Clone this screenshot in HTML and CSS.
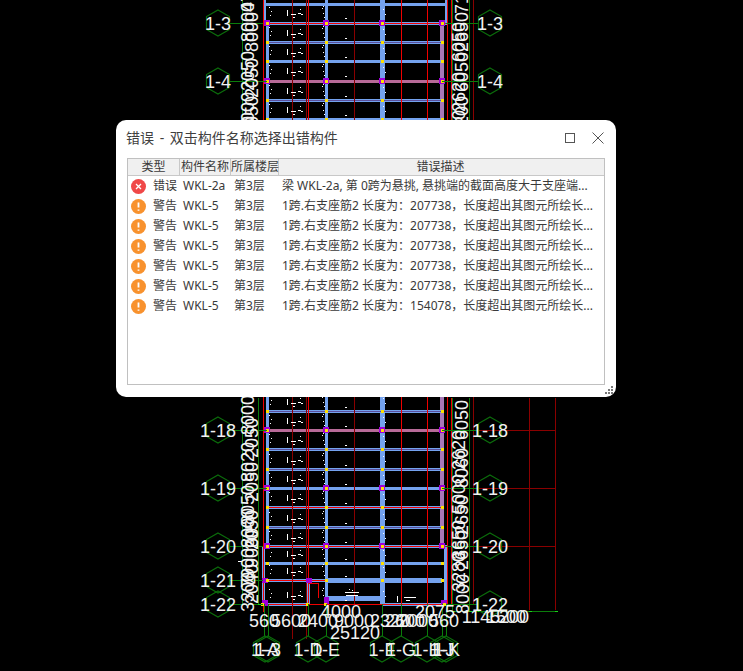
FILE: index.html
```html
<!DOCTYPE html>
<html lang="zh-CN">
<head>
<meta charset="utf-8">
<title>错误</title>
<link rel="stylesheet" href="styles.css">
</head>
<body>
<main class="stage">
<svg class="cad" width="743" height="671" viewBox="0 0 743 671" xmlns="http://www.w3.org/2000/svg">
  <defs>
    <polygon id="hex" class="hex" points="0,-13 11.5,-6.5 11.5,6.5 0,13 -11.5,6.5 -11.5,-6.5"/>
    <g id="noise">
      <path class="noise" d="M287 -12v6M291 -8h5M298 -9h3M301 -8h2M269 -15h1M271 -11h1M270 -7h1M322 -14h1M323 -9h1M324 -5h1M323 -16h1M293 -5h2M345 -4h2M383 -13h1M385 -8h1M300 -13h1"/>
    </g>
    <g id="nodes">
      <rect class="node" x="266" y="-1" width="3" height="3"/>
      <rect class="node" x="325" y="-1" width="3" height="3"/>
      <rect class="node" x="381" y="-1" width="3" height="3"/>
      <rect class="node" x="441" y="-1" width="3" height="3"/>
    </g>
    <g id="bignodes">
      <rect class="purple" x="264" y="-3" width="6" height="6"/>
      <rect class="purple" x="323" y="-3" width="6" height="6"/>
      <rect class="purple" x="379" y="-3" width="6" height="6"/>
      <rect class="purple" x="439" y="-3" width="6" height="6"/>
    </g>
  </defs>

  <!-- beams -->
  <path class="beam" d="M264 0V22M446 0V22M267 22V546M326 0V604M263 546V604M308 580V604M445 546V604"/>
  <path class="beam-thick" d="M382 0V604M326 580H442M326 598H382"/>
  <path class="beam-mauve" d="M442 22V546"/>
  <path class="beam" d="M264 4H446M263 23H447M267 42H442M267 61H442M267 100H442M267 119H442M267 411H442M267 449H442M267 469H442M267 488H442M267 507H442M267 527H442M263 546H447M263 563H445M263 580H326M382 604H446M263 604H308"/>
  <path class="beam-core" d="M267 42H442M267 100H442M267 449H442M267 469H442M267 411H442M267 527H442"/>
  <path class="beam-hot" d="M267 81H442M267 430H442"/>

  <!-- grid lines run over the beams -->
  <path class="dim-red" d="M473 0V604M529 398V610M555 398V610M292 0V639M306 0V639M354 0V604M473 430H555M473 488H555M473 546H555"/>
  <path class="red" d="M263 0V612M308 0V610M401 0V606M427 0V606M447 0V612M451 0V120M451 398V604"/>
  <path class="red" d="M263 23H447M263 546H447M263 580H326M263 604H447M267 507H442M308 583H318M318 583V598"/>

  <!-- noise marks -->
  <use href="#noise" y="22"/><use href="#noise" y="42"/><use href="#noise" y="61"/><use href="#noise" y="80"/><use href="#noise" y="100"/><use href="#noise" y="119"/>
  <use href="#noise" y="411"/><use href="#noise" y="430"/><use href="#noise" y="449"/><use href="#noise" y="469"/><use href="#noise" y="488"/><use href="#noise" y="507"/><use href="#noise" y="527"/><use href="#noise" y="546"/><use href="#noise" y="563"/><use href="#noise" y="580"/><use href="#noise" y="604"/>
  <path class="noise" d="M345 592h14M349 589h1M352 590h1M346 595h12M397 596v6M404 597h12M406 600h4M238 561h4"/>

  <!-- nodes -->
  <use href="#bignodes" y="23"/><use href="#bignodes" y="81"/><use href="#bignodes" y="430"/><use href="#bignodes" y="488"/><use href="#bignodes" y="546"/>
  <rect class="purple" x="262" y="578" width="6" height="5"/><rect class="purple" x="306" y="578" width="6" height="5"/><rect class="purple" x="262" y="600" width="6" height="6"/><rect class="purple" x="324" y="597" width="5" height="7"/><rect class="purple" x="441" y="600" width="6" height="6"/>
  <use href="#nodes" y="23"/><use href="#nodes" y="42"/><use href="#nodes" y="61"/><use href="#nodes" y="81"/><use href="#nodes" y="100"/><use href="#nodes" y="119"/><use href="#nodes" y="411"/><use href="#nodes" y="430"/><use href="#nodes" y="449"/><use href="#nodes" y="469"/><use href="#nodes" y="488"/><use href="#nodes" y="507"/><use href="#nodes" y="527"/><use href="#nodes" y="546"/><use href="#nodes" y="563"/><use href="#nodes" y="580"/>
  <rect class="node" x="261" y="603" width="3" height="3"/><rect class="node" x="306" y="603" width="3" height="3"/><rect class="node" x="324" y="603" width="3" height="3"/><rect class="node" x="443" y="603" width="3" height="3"/>

  <!-- axis stems -->
  <path class="green" d="M230 23H263M230 81H267M230 430H267M230 488H267M230 546H263M230 580H263M230 604H263M446 23H478M442 81H478M442 430H478M442 488H478M446 546H478M447 604H478M242 0V120M242 398V604M258 398V604M452 0V120M452 398V612M469 0V120M469 398V612M447 611H555M264 604V636M268 604V636M308 604V636M326 604V636M382 604V636M401 604V636M427 604V636M442 604V636M446 604V636"/>
  <path class="green-dot" d="M242 604h3M258 604h3M452 611h3M469 611h3M529 611h3M555 611h3M478 611h3"/>

  <!-- axis bubbles -->
  <use href="#hex" x="218" y="23"/><use href="#hex" x="218" y="81"/><use href="#hex" x="218" y="430"/><use href="#hex" x="218" y="488"/><use href="#hex" x="218" y="546"/><use href="#hex" x="218" y="580"/><use href="#hex" x="218" y="604"/>
  <use href="#hex" x="490" y="23"/><use href="#hex" x="490" y="81"/><use href="#hex" x="490" y="430"/><use href="#hex" x="490" y="488"/><use href="#hex" x="490" y="546"/><use href="#hex" x="490" y="604"/>
  <use href="#hex" x="265" y="649"/><use href="#hex" x="268" y="649"/><use href="#hex" x="308" y="649"/><use href="#hex" x="326" y="649"/><use href="#hex" x="382" y="649"/><use href="#hex" x="401" y="649"/><use href="#hex" x="427" y="649"/><use href="#hex" x="442" y="649"/><use href="#hex" x="446" y="649"/>

  <!-- axis labels -->
  <g class="label">
    <text x="218" y="30">1-3</text><text x="218" y="88">1-4</text><text x="218" y="437">1-18</text><text x="218" y="495">1-19</text><text x="218" y="553">1-20</text><text x="218" y="587">1-21</text><text x="218" y="611">1-22</text>
    <text x="490" y="30">1-3</text><text x="490" y="88">1-4</text><text x="490" y="437">1-18</text><text x="490" y="495">1-19</text><text x="490" y="553">1-20</text><text x="490" y="611">1-22</text>
    <text x="265" y="656">1-A</text><text x="268" y="656">1-3</text><text x="308" y="656">1-D</text><text x="326" y="656">1-E</text><text x="382" y="656">1-F</text><text x="401" y="656">1-G</text><text x="427" y="656">1-H</text><text x="442" y="656">1-J</text><text x="446" y="656">1-K</text>
  </g>

  <!-- horizontal dimensions -->
  <g class="label">
    <text x="264" y="627">560</text><text x="291" y="627">5600</text><text x="318" y="627">2400</text><text x="341" y="618">4000</text><text x="354" y="627">9000</text><text x="355" y="639">25120</text>
    <text x="390" y="627">2320</text><text x="405" y="627">2600</text><text x="418" y="627">2000</text><text x="435" y="618">2075</text><text x="444" y="627">560</text><text x="481" y="623">1145</text><text x="506" y="623">1500</text><text x="514" y="623">200</text>
  </g>

  <!-- vertical dimensions -->
  <g class="label">
    <text transform="translate(254 22) rotate(-90)">8000</text><text transform="translate(254 -8) rotate(-90)">4790</text>
    <text transform="translate(258 32) rotate(-90)">8000</text><text transform="translate(254 71) rotate(-90)">2050</text><text transform="translate(258 78) rotate(-90)">2050</text><text transform="translate(254 112) rotate(-90)">8000</text><text transform="translate(258 116) rotate(-90)">2050</text><text transform="translate(254 136) rotate(-90)">9020</text>
    <text transform="translate(254 415) rotate(-90)">8000</text><text transform="translate(258 438) rotate(-90)">2050</text><text transform="translate(254 462) rotate(-90)">8020</text><text transform="translate(258 482) rotate(-90)">2050</text><text transform="translate(254 505) rotate(-90)">8050</text><text transform="translate(258 530) rotate(-90)">2050</text><text transform="translate(254 528) rotate(-90)">8000</text>
    <text transform="translate(254 568) rotate(-90)">7900</text><text transform="translate(258 548) rotate(-90)">9060</text><text transform="translate(258 584) rotate(-90)">2040</text><text transform="translate(254 592) rotate(-90)">3300</text>

    <text transform="translate(468 -6) rotate(-90)">7100</text><text transform="translate(468 32) rotate(-90)">2650</text><text transform="translate(465 42) rotate(-90)">6050</text><text transform="translate(468 72) rotate(-90)">6050</text><text transform="translate(465 92) rotate(-90)">2620</text><text transform="translate(468 116) rotate(-90)">8200</text><text transform="translate(465 130) rotate(-90)">9020</text>
    <text transform="translate(468 420) rotate(-90)">6050</text><text transform="translate(465 450) rotate(-90)">2620</text><text transform="translate(468 468) rotate(-90)">8060</text><text transform="translate(465 494) rotate(-90)">5000</text><text transform="translate(468 515) rotate(-90)">2650</text><text transform="translate(465 540) rotate(-90)">3650</text>
    <text transform="translate(468 550) rotate(-90)">2650</text><text transform="translate(465 572) rotate(-90)">3280</text><text transform="translate(469 594) rotate(-90)">8000</text>
  </g>
</svg>

<section class="dialog">
  <header class="titlebar">
    <h1 class="title">错误 - 双击构件名称选择出错构件</h1>
    <div class="controls">
      <svg class="ctl" width="12" height="12" viewBox="0 0 12 12"><rect x="1.500" y="1.500" width="9" height="9"/></svg>
      <svg class="ctl" width="14" height="14" viewBox="0 0 14 14"><path d="M1.500 1.500L12.500 12.500M12.500 1.500L1.500 12.500"/></svg>
    </div>
  </header>
  <div class="table">
    <div class="head">
      <div class="th">类型</div>
      <div class="th">构件名称</div>
      <div class="th">所属楼层</div>
      <div class="th last">错误描述</div>
    </div>
    <div class="row"><div class="type"><svg class="ico" width="15" height="15" viewBox="0 0 15 15"><circle class="ico-err" cx="7.500" cy="7.500" r="7.500"/><path class="ico-x" d="M5 5L10 10M10 5L5 10"/></svg>错误</div><div class="cell">WKL-2a</div><div class="cell">第3层</div><div class="cell">梁 WKL-2a, 第 0跨为悬挑, 悬挑端的截面高度大于支座端...</div></div>
    <div class="row"><div class="type"><svg class="ico" width="15" height="15" viewBox="0 0 15 15"><circle class="ico-warn" cx="7.500" cy="7.500" r="7.500"/><path class="ico-bang" d="M7.500 3.500V8.500M7.500 10.500V11.800"/></svg>警告</div><div class="cell">WKL-5</div><div class="cell">第3层</div><div class="cell">1跨.右支座筋2 长度为：207738，长度超出其图元所绘长...</div></div>
    <div class="row"><div class="type"><svg class="ico" width="15" height="15" viewBox="0 0 15 15"><circle class="ico-warn" cx="7.500" cy="7.500" r="7.500"/><path class="ico-bang" d="M7.500 3.500V8.500M7.500 10.500V11.800"/></svg>警告</div><div class="cell">WKL-5</div><div class="cell">第3层</div><div class="cell">1跨.右支座筋2 长度为：207738，长度超出其图元所绘长...</div></div>
    <div class="row"><div class="type"><svg class="ico" width="15" height="15" viewBox="0 0 15 15"><circle class="ico-warn" cx="7.500" cy="7.500" r="7.500"/><path class="ico-bang" d="M7.500 3.500V8.500M7.500 10.500V11.800"/></svg>警告</div><div class="cell">WKL-5</div><div class="cell">第3层</div><div class="cell">1跨.右支座筋2 长度为：207738，长度超出其图元所绘长...</div></div>
    <div class="row"><div class="type"><svg class="ico" width="15" height="15" viewBox="0 0 15 15"><circle class="ico-warn" cx="7.500" cy="7.500" r="7.500"/><path class="ico-bang" d="M7.500 3.500V8.500M7.500 10.500V11.800"/></svg>警告</div><div class="cell">WKL-5</div><div class="cell">第3层</div><div class="cell">1跨.右支座筋2 长度为：207738，长度超出其图元所绘长...</div></div>
    <div class="row"><div class="type"><svg class="ico" width="15" height="15" viewBox="0 0 15 15"><circle class="ico-warn" cx="7.500" cy="7.500" r="7.500"/><path class="ico-bang" d="M7.500 3.500V8.500M7.500 10.500V11.800"/></svg>警告</div><div class="cell">WKL-5</div><div class="cell">第3层</div><div class="cell">1跨.右支座筋2 长度为：207738，长度超出其图元所绘长...</div></div>
    <div class="row"><div class="type"><svg class="ico" width="15" height="15" viewBox="0 0 15 15"><circle class="ico-warn" cx="7.500" cy="7.500" r="7.500"/><path class="ico-bang" d="M7.500 3.500V8.500M7.500 10.500V11.800"/></svg>警告</div><div class="cell">WKL-5</div><div class="cell">第3层</div><div class="cell">1跨.右支座筋2 长度为：154078，长度超出其图元所绘长...</div></div>
  </div>
  <svg class="grip" width="9" height="9" viewBox="0 0 9 9"><path d="M6 0h2v2h-2zM3 3h2v2h-2zM6 3h2v2h-2zM0 6h2v2h-2zM3 6h2v2h-2zM6 6h2v2h-2z"/></svg>
</section>
</main>
</body>
</html>
```
FILE: styles.css
```css
html, body {
  margin: 0;
  padding: 0;
  background: #000;
}

.stage {
  position: relative;
  width: 743px;
  height: 671px;
  overflow: hidden;
  background: #000;
  font-family: "Noto Sans", "Noto Sans CJK SC", sans-serif;
}

.cad {
  position: absolute;
  left: 0;
  top: 0;
  display: block;
}

.cad path,
.cad rect {
  fill: none;
  shape-rendering: crispEdges;
}

.dim-red { stroke: #8a0000; stroke-width: 1; }
.red { stroke: #f00000; stroke-width: 1; }
.beam { stroke: #74a2ee; stroke-width: 3; }
.beam-thick { stroke: #74a2ee; stroke-width: 5; }
.beam-mauve { stroke: #a878b8; stroke-width: 4; }
.beam-core { stroke: #5a4f9c; stroke-width: 1; }
.beam-hot { stroke: #b86a98; stroke-width: 3; }
.green { stroke: #0b7d0b; stroke-width: 1; }
.green-dot { stroke: #19d019; stroke-width: 1; }
.cad .noise { stroke: #fff; stroke-width: 1; }
.cad .node { fill: #ffe000; }
.cad .purple { fill: #a000d8; }
.hex { fill: none; stroke: #0b6d0b; stroke-width: 1.2; }

.label text {
  fill: #f2f2f2;
  font-family: "Liberation Sans", Arial, sans-serif;
  font-size: 18px;
  text-anchor: middle;
}

.dialog {
  position: absolute;
  left: 116px;
  top: 120px;
  width: 500px;
  height: 277px;
  box-sizing: border-box;
  padding: 0 11px;
  background: #fff;
  border-radius: 10px;
  display: flex;
  flex-direction: column;
}

.titlebar {
  height: 38px;
  box-sizing: border-box;
  padding-bottom: 3px;
  display: flex;
  align-items: center;
  justify-content: space-between;
}

.title {
  margin: 0 0 0 -1px;
  font-size: 14px;
  font-weight: 400;
  word-spacing: 2px;
  color: #404040;
  line-height: 20px;
}

.controls {
  display: flex;
  align-items: center;
  gap: 15px;
}

.ctl { display: block; }
.ctl rect, .ctl path { fill: none; stroke: #555; stroke-width: 1; }

.table {
  width: 478px;
  height: 227px;
  box-sizing: border-box;
  border: 1px solid #c0c0c0;
  background: #fff;
}

.head, .row {
  display: grid;
  grid-template-columns: 52px 51px 48px 1fr;
  color: #3a3a3a;
  font-size: 12px;
}

.head {
  height: 17px;
  box-sizing: border-box;
  background: #f0f0f0;
  border-bottom: 1px solid #c8c8c8;
}

.th {
  text-align: center;
  line-height: 16px;
  border-right: 1px solid #c8c8c8;
  white-space: nowrap;
}

.th.last { border-right: 0; padding-right: 2px; }

.row { height: 20px; line-height: 20px; }

.type {
  display: flex;
  align-items: center;
  gap: 7px;
  padding-left: 3px;
  white-space: nowrap;
}

.ico { display: block; flex: none; }
.ico-err { fill: #f04848; }
.ico-warn { fill: #f8922e; }
.ico-x { stroke: #fff; stroke-width: 1.3; fill: none; }
.ico-bang { stroke: #fff; stroke-width: 1.8; fill: none; }

.cell {
  padding-left: 3px;
  white-space: nowrap;
  overflow: hidden;
}

.grip {
  position: absolute;
  right: 2px;
  bottom: 2px;
  fill: #777;
}
```
